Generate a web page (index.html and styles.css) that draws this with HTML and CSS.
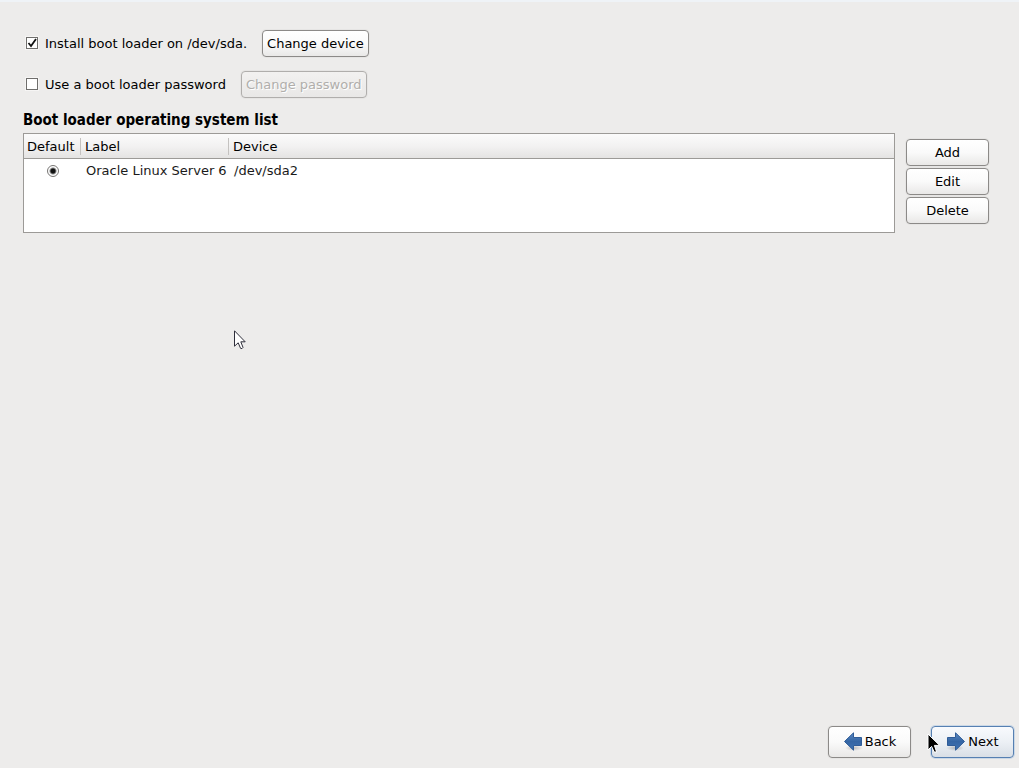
FILE: index.html
```html
<!DOCTYPE html>
<html lang="en">
<head>
    <meta charset="UTF-8">
    <meta name="viewport" content="width=device-width, initial-scale=1.0">
    <title>Boot loader</title>
    <link rel="stylesheet" href="styles.css">
</head>
<body>
    <main class="content">
        <div class="option">
            <input type="checkbox" id="install" checked>
            <label for="install">Install boot loader on /dev/sda.</label>
            <button type="button">Change device</button>
        </div>
        <div class="option">
            <input type="checkbox" id="password">
            <label for="password">Use a boot loader password</label>
            <button type="button" disabled>Change password</button>
        </div>
        <h1>Boot loader operating system list</h1>
        <div class="os-section">
            <div class="os-list">
                <table>
                    <thead>
                        <tr>
                            <th class="col-default"><span>Default</span></th>
                            <th class="col-label"><span>Label</span></th>
                            <th><span>Device</span></th>
                        </tr>
                    </thead>
                    <tbody>
                        <tr>
                            <td class="default-cell"><input type="radio" name="default-os" aria-label="Oracle Linux Server 6" checked></td>
                            <td>Oracle Linux Server 6</td>
                            <td>/dev/sda2</td>
                        </tr>
                    </tbody>
                </table>
            </div>
            <div class="os-actions">
                <button type="button">Add</button>
                <button type="button">Edit</button>
                <button type="button">Delete</button>
            </div>
        </div>
    </main>
    <footer class="nav">
        <button type="button">
            <svg class="arrow" width="20" height="22" viewBox="0 0 20 22" aria-hidden="true">
                <defs>
                    <linearGradient id="blue" x1="0" y1="0" x2="0" y2="1">
                        <stop offset="0" stop-color="#5d8bc4"/>
                        <stop offset="0.5" stop-color="#3465a4"/>
                        <stop offset="1" stop-color="#3f73b3"/>
                    </linearGradient>
                    <radialGradient id="shade">
                        <stop offset="0" stop-color="#000" stop-opacity="0.22"/>
                        <stop offset="1" stop-color="#000" stop-opacity="0"/>
                    </radialGradient>
                </defs>
                <ellipse cx="11" cy="18" rx="9" ry="3" fill="url(#shade)"/>
                <path d="M1.5 11.5L10.5 2.8V7.5H18.5V15.5H10.5V20.2Z" fill="url(#blue)" stroke="#2f5c98"/>
            </svg>
            Back
        </button>
        <button type="button" class="focused">
            <svg class="arrow" width="20" height="22" viewBox="0 0 20 22" aria-hidden="true">
                <ellipse cx="9" cy="18" rx="9" ry="3" fill="url(#shade)"/>
                <path d="M18.5 11.5L9.5 2.8V7.5H1.5V15.5H9.5V20.2Z" fill="url(#blue)" stroke="#2f5c98"/>
            </svg>
            Next
        </button>
    </footer>
    <svg class="pointer pointer-light" width="12" height="20" viewBox="0 0 12 20" aria-hidden="true">
        <path d="M0.5 0.8V16.2L4.2 12.8L6.6 18.4Q8.2 19.3 9 17.4L6.8 11.8H11.2Z" fill="#fff" stroke="#2e2e3a"/>
    </svg>
    <svg class="pointer pointer-dark" width="14" height="20" viewBox="0 0 14 20" aria-hidden="true">
        <path d="M1 1V17L4.6 13.4L7.2 19H9.6L7.4 12.4H12.6Z" fill="#000" stroke="#fff" stroke-width="1"/>
    </svg>
</body>
</html>
```
FILE: styles.css
```css
* {
    box-sizing: border-box;
}
body {
    margin: 0;
    min-height: 100vh;
    display: flex;
    flex-direction: column;
    border-top: 2px solid #eff3f7;
    background: #edeceb;
    color: #000;
    font-family: 'DejaVu Sans', sans-serif;
    font-size: 13px;
    line-height: 17px;
}
.content {
    flex: 1;
    padding: 28px 30px 0 23px;
}
.option {
    display: flex;
    align-items: center;
    margin-bottom: 14px;
}
.option label {
    margin: 0 15px 0 7px;
}
input {
    appearance: none;
    margin: 0;
    background: #fff;
}
input[type="checkbox"] {
    width: 12px;
    height: 12px;
    margin: 0 0 1px 3px;
    border: 1px solid #6f6e6c;
    box-shadow: 0 0 0 1px #f6f5f4;
}
input[type="checkbox"]:checked {
    background: #fff url("data:image/svg+xml,%3Csvg xmlns='http://www.w3.org/2000/svg' viewBox='0 0 10 10'%3E%3Cpath d='M1.5 5L4 8L9 1' fill='none' stroke='%23111' stroke-width='1.8'/%3E%3C/svg%3E");
}
input[type="radio"] {
    display: block;
    width: 12px;
    height: 12px;
    margin: 0 auto;
    border: 1px solid #777573;
    border-radius: 50%;
    background: radial-gradient(circle, #111 2px, #fff 4px);
}
button {
    height: 27px;
    padding: 0 4px 1px;
    border: 1px solid #8c8a88;
    border-radius: 4px;
    background: linear-gradient(#fff, #fafafa 50%, #e9e8e7);
    box-shadow: 0 0 0 1px #e6e5e4;
    color: #000;
    font: inherit;
}
button:disabled {
    border-color: #b0aeac;
    background: linear-gradient(#f2f1f0, #e9e8e7);
    color: #b0aeab;
    text-shadow: 1px 1px #fff;
}
h1 {
    margin: 0 0 4px;
    font-family: 'DejaVu Sans Condensed', 'DejaVu Sans', sans-serif;
    font-size: 15px;
    line-height: 17px;
}
.os-section {
    display: flex;
    gap: 11px;
}
.os-list {
    flex: 1;
    height: 100px;
    border: 1px solid #9c9a97;
    background: #fff;
}
table {
    width: 100%;
    table-layout: fixed;
    border-collapse: separate;
    border-spacing: 0;
}
thead {
    background: linear-gradient(#fbfbfb, #f2f1f1 50%, #e3e2e1);
}
th {
    height: 25px;
    padding: 0;
    border-bottom: 1px solid #9c9a97;
    font-weight: normal;
    text-align: left;
}
th span {
    display: block;
    padding-left: 4px;
    border-right: 1px solid #c4c2c0;
}
th:last-child span {
    border: 0;
}
.col-default {
    width: 57px;
}
.col-default span {
    padding-left: 3px;
}
.col-label {
    width: 148px;
}
td {
    height: 24px;
    padding: 0 0 2px 5px;
    color: #1a1a1a;
}
.default-cell {
    padding: 0;
}
.os-actions {
    display: flex;
    flex-direction: column;
    gap: 2px;
    width: 83px;
    padding-top: 6px;
}
.nav {
    display: flex;
    justify-content: flex-end;
    gap: 20px;
    padding: 0 5px 10px;
}
.nav button {
    display: flex;
    align-items: center;
    justify-content: center;
    gap: 2px;
    width: 83px;
    height: 32px;
    padding-bottom: 2px;
}
.nav .focused {
    border-color: #5680b2;
    background: linear-gradient(#f8fafd, #ecf0f5 50%, #d9dfe6);
    box-shadow: 0 0 0 1px #cbd8e6;
}
.pointer {
    position: absolute;
}
.pointer-light {
    left: 234px;
    top: 330px;
}
.pointer-dark {
    left: 927px;
    top: 733px;
}
```
